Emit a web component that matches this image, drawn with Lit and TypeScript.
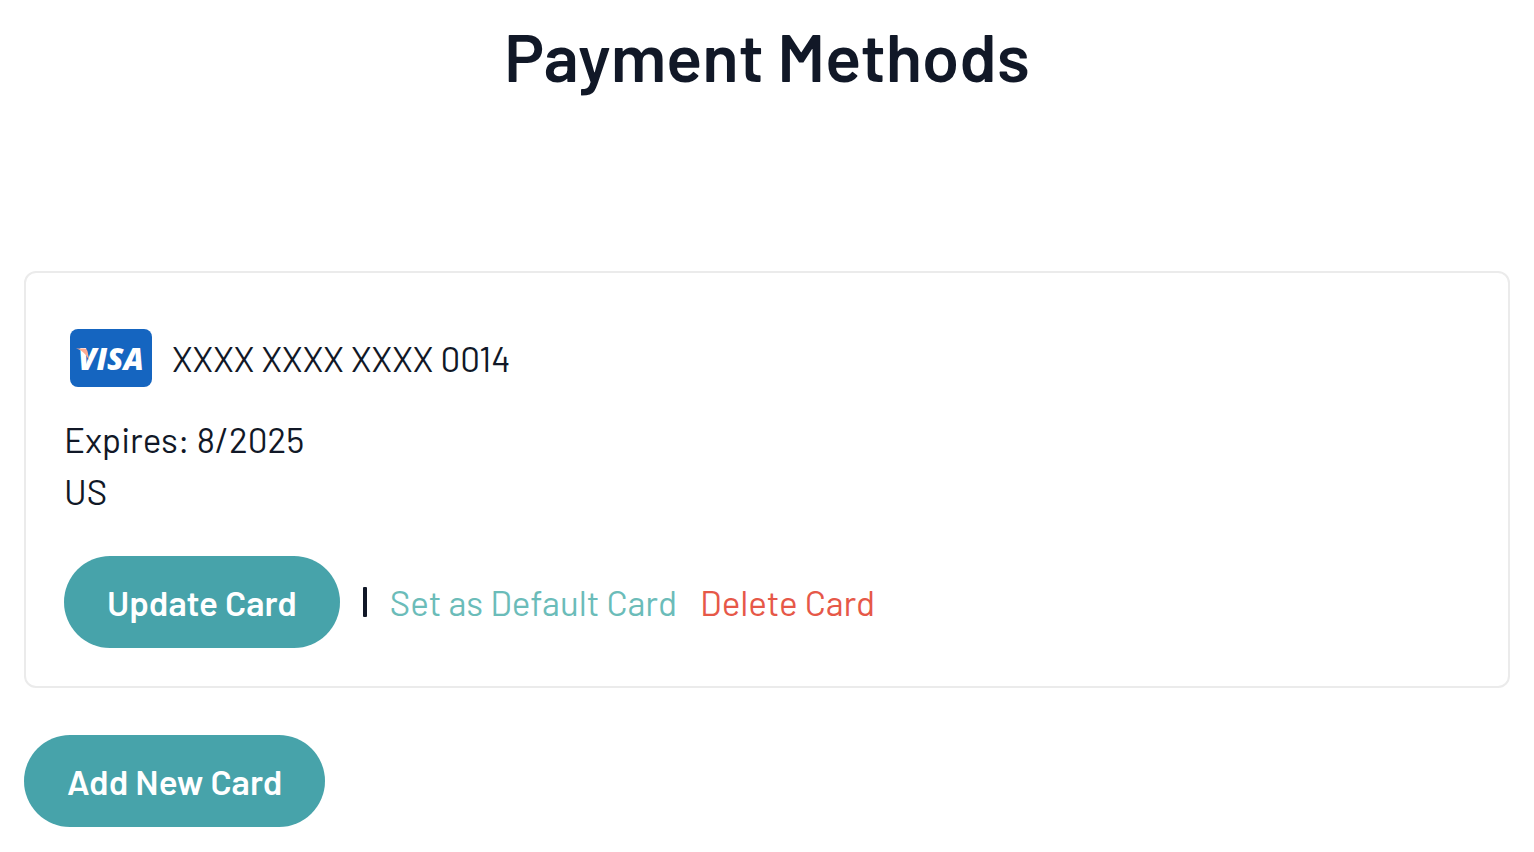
import { LitElement, html, css } from "lit";
import { customElement } from "lit/decorators.js";

@customElement("visa-logo")
export class VisaLogo extends LitElement {
  static styles = css`
    :host {
      display: block;
      flex: none;
    }
    .logo {
      display: block;
      width: 82px;
      height: 58px;
    }
    .word {
      font: italic 800 30px "Open Sans", sans-serif;
      fill: #ffffff;
    }
  `;

  render() {
    return html`
      <svg class="logo" viewBox="0 0 82 58" role="img" aria-label="Visa">
        <rect width="82" height="58" rx="8" fill="#1565c0" />
        <text class="word" x="8" y="41">VISA</text>
        <path d="M6 19.500h7.500c2.500 0 3.600 1 4.100 3l1.800 9.500C16.200 25 12.500 21.500 6 19.500z" fill="#ffab91" />
      </svg>
    `;
  }
}

@customElement("app-root")
export class AppRoot extends LitElement {
  static styles = css`
    :host {
      display: block;
      box-sizing: border-box;
      min-height: 100vh;
      padding: 15px 24px 24px;
      background: #ffffff;
      color: #111827;
      font-family: Barlow, Roboto, sans-serif;
      font-size: 35px;
      line-height: 52px;
    }
    .title {
      margin: 0 0 176px;
      font-size: 67px;
      font-weight: 600;
      line-height: 80px;
      text-align: center;
    }
    .card {
      padding: 56px 38px 38px;
      border: 2px solid #ebebeb;
      border-radius: 12px;
    }
    .number {
      display: flex;
      align-items: center;
      gap: 20px;
      margin-bottom: 26px;
      padding-left: 6px;
    }
    .line {
      margin: 0;
    }
    .actions {
      display: flex;
      align-items: center;
      gap: 23px;
      margin-top: 39px;
    }
    .button {
      padding: 20px 43px;
      border: 0;
      border-radius: 46px;
      background: #47a3aa;
      color: #ffffff;
      font: inherit;
      font-weight: 600;
      cursor: pointer;
    }
    .divider {
      width: 4px;
      height: 30px;
      border-radius: 1px;
      background: #111827;
    }
    .link {
      color: #6bbcb9;
      text-decoration: none;
    }
    .danger {
      color: #e65848;
    }
    .add {
      margin-top: 47px;
    }
  `;

  render() {
    return html`
      <main>
        <h1 class="title">Payment Methods</h1>
        <section class="card" aria-label="Saved card">
          <div class="number">
            <visa-logo></visa-logo>
            <span>XXXX XXXX XXXX 0014</span>
          </div>
          <p class="line">Expires: 8/2025</p>
          <p class="line">US</p>
          <div class="actions">
            <button class="button" type="button">Update Card</button>
            <span class="divider"></span>
            <a class="link" href="#default">Set as Default Card</a>
            <a class="link danger" href="#delete">Delete Card</a>
          </div>
        </section>
        <button class="button add" type="button">Add New Card</button>
      </main>
    `;
  }
}
